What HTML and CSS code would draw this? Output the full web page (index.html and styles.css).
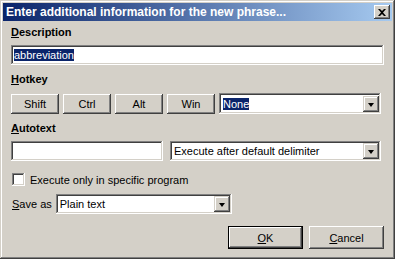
FILE: index.html
```html
<!DOCTYPE html>
<html lang="en">
<head>
    <meta charset="UTF-8">
    <title>Enter additional information for the new phrase...</title>
    <link rel="stylesheet" href="styles.css">
</head>
<body>
<div class="window">
    <div class="titlebar">
        <span class="title">Enter additional information for the new phrase...</span>
        <button class="close" type="button">
            <svg width="8" height="7" viewBox="0 0 8 7"><path d="M0 0h2l2 2 2-2h2L5 3.5 8 7H6L4 5 2 7H0l3-3.5z" fill="#000"/></svg>
        </button>
    </div>
    <div class="content">
        <div class="label first"><u>D</u>escription</div>
        <div class="field description"><span class="sel">abbreviation</span></div>

        <div class="label hotkey-label"><u>H</u>otkey</div>
        <div class="row hotkeys">
            <button class="btn key" type="button">Shift</button>
            <button class="btn key" type="button">Ctrl</button>
            <button class="btn key" type="button">Alt</button>
            <button class="btn key" type="button">Win</button>
            <div class="combo hotkey-combo">
                <span class="value"><span class="sel">None</span></span>
                <span class="arrow"></span>
            </div>
        </div>

        <div class="label"><u>A</u>utotext</div>
        <div class="row autotext">
            <div class="field autotext-field"></div>
            <div class="combo exec-combo">
                <span class="value">Execute after default delimiter</span>
                <span class="arrow"></span>
            </div>
        </div>

        <div class="check">
            <span class="box"></span>
            <span>Execute only in specific program</span>
        </div>

        <div class="row save">
            <span class="save-label"><u>S</u>ave as</span>
            <div class="combo save-combo">
                <span class="value">Plain text</span>
                <span class="arrow"></span>
            </div>
        </div>

        <div class="actions">
            <button class="btn action default" type="button"><u>O</u>K</button>
            <button class="btn action" type="button"><u>C</u>ancel</button>
        </div>
    </div>
</div>
</body>
</html>
```

FILE: styles.css
```css
body {
    margin: 0;
    background-color: #d4d0c8;
    font-family: "Liberation Sans", Arial, sans-serif;
    font-size: 11px;
    color: #000;
}
.window {
    width: 395px;
    height: 259px;
    box-sizing: border-box;
    padding: 3px;
    background-color: #d4d0c8;
    box-shadow: inset -1px -1px #404040, inset 1px 1px #d4d0c8,
                inset -2px -2px #808080, inset 2px 2px #fff;
}
.titlebar {
    height: 18px;
    display: flex;
    align-items: center;
    justify-content: space-between;
    padding: 0 2px 0 3px;
    background: linear-gradient(to right, #0a246a, #a6caf0);
    color: #fff;
    font-weight: bold;
    font-size: 12px;
}
.close {
    width: 16px;
    height: 14px;
    padding: 0;
    border: none;
    background-color: #d4d0c8;
    display: flex;
    align-items: center;
    justify-content: center;
    box-shadow: inset -1px -1px #404040, inset 1px 1px #fff,
                inset -2px -2px #808080, inset 2px 2px #d4d0c8;
}
.content {
    padding: 0 8px;
}
.label {
    font-weight: bold;
    line-height: 13px;
    margin-top: 8px;
    margin-bottom: 6px;
}
.label.first {
    margin-top: 5px;
}
.hotkey-label {
    margin-bottom: 7px;
}
.field, .combo {
    box-sizing: border-box;
    height: 20px;
    background-color: #fff;
    box-shadow: inset -1px -1px #fff, inset 1px 1px #808080,
                inset -2px -2px #d4d0c8, inset 2px 2px #404040;
}
.field {
    padding: 3px 3px;
    line-height: 14px;
}
.description {
    width: 373px;
}
.sel {
    background-color: #0a246a;
    color: #fff;
}
.row {
    display: flex;
    align-items: center;
}
.hotkeys {
    gap: 4px;
}
.btn {
    font-family: inherit;
    font-size: 11px;
    color: #000;
    padding: 0;
    border: none;
    background-color: #d4d0c8;
    box-shadow: inset -1px -1px #404040, inset 1px 1px #fff,
                inset -2px -2px #808080, inset 2px 2px #d4d0c8;
}
.key {
    width: 48px;
    height: 20px;
}
.combo {
    display: flex;
    align-items: center;
    padding: 2px;
}
.combo .value {
    flex: 1;
    padding-left: 2px;
    line-height: 14px;
    white-space: nowrap;
    overflow: hidden;
}
.arrow {
    width: 16px;
    height: 16px;
    background-color: #d4d0c8;
    box-shadow: inset -1px -1px #404040, inset 1px 1px #d4d0c8,
                inset -2px -2px #808080, inset 2px 2px #fff;
    position: relative;
}
.arrow::after {
    content: "";
    position: absolute;
    left: 5px;
    top: 7px;
    border-left: 3.5px solid transparent;
    border-right: 3.5px solid transparent;
    border-top: 4px solid #000;
}
.hotkey-combo {
    width: 162px;
    height: 21px;
}
.autotext {
    gap: 7px;
}
.autotext-field {
    width: 152px;
}
.exec-combo {
    width: 211px;
}
.check {
    display: flex;
    align-items: center;
    gap: 5px;
    margin-top: 12px;
    padding-left: 1px;
    height: 13px;
}
.box {
    width: 13px;
    height: 13px;
    box-sizing: border-box;
    background-color: #fff;
    box-shadow: inset -1px -1px #fff, inset 1px 1px #808080,
                inset -2px -2px #d4d0c8, inset 2px 2px #404040;
}
.save {
    margin-top: 8px;
    gap: 4px;
}
.save-label {
    padding-left: 1px;
}
.save-combo {
    width: 176px;
}
.actions {
    display: flex;
    justify-content: flex-end;
    gap: 6px;
    margin-top: 12px;
}
.action {
    width: 75px;
    height: 23px;
}
.default {
    box-shadow: inset 0 0 0 1px #000, inset -2px -2px #404040, inset 2px 2px #fff,
                inset -3px -3px #808080;
}
```
